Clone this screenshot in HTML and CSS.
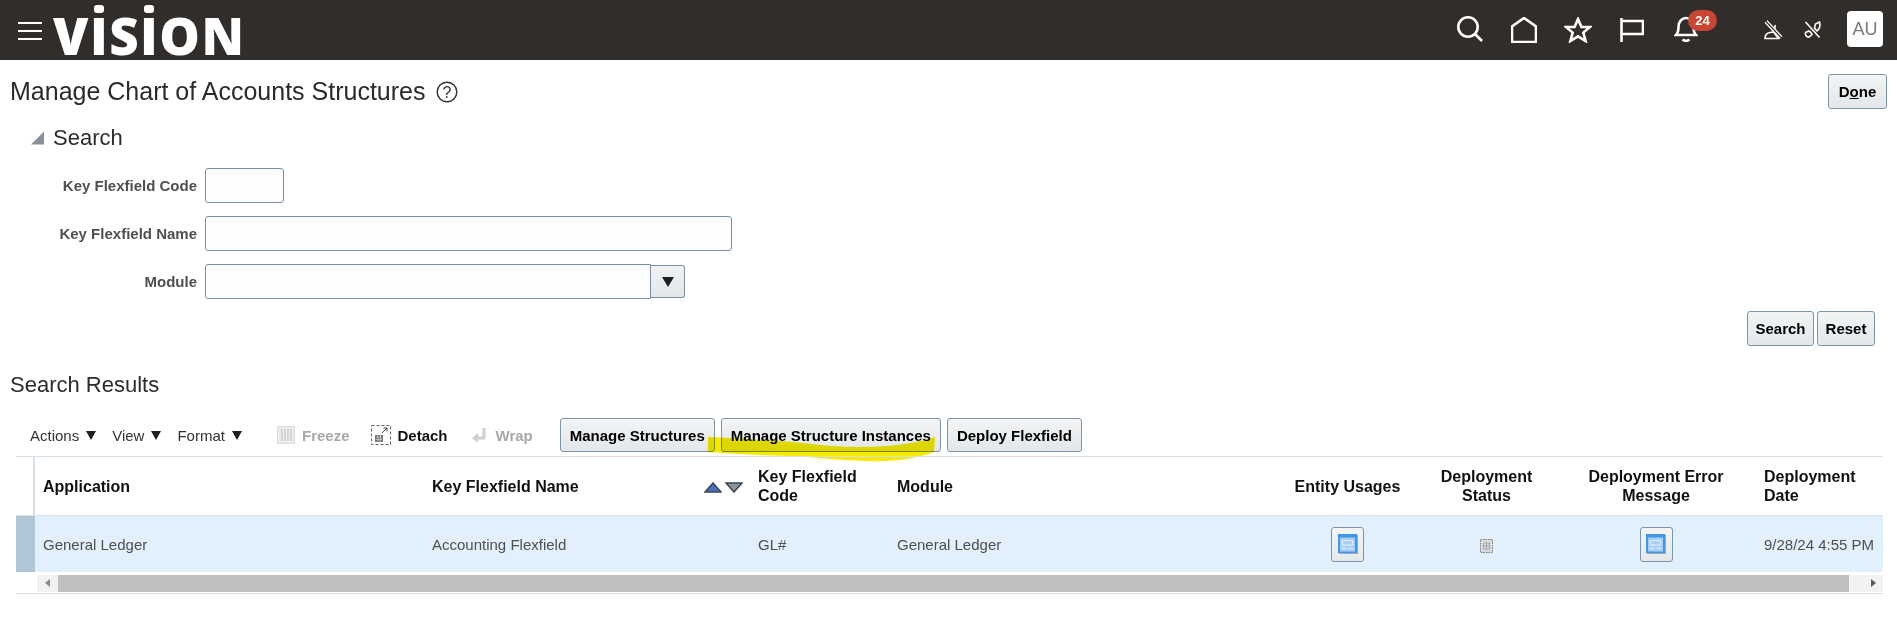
FILE: index.html
```html
<!DOCTYPE html>
<html lang="en">
<head>
<meta charset="utf-8">
<title>Manage Chart of Accounts Structures</title>
<link rel="stylesheet" href="styles.css">
</head>
<body>
<header class="topbar">
  <button class="burger" aria-label="Menu"><span></span><span></span><span></span></button>
  <div class="logo">V<span class="dotted">I</span>S<span class="dotted">I</span>ON</div>
  <nav class="top-icons">
    <svg class="ti ti-search" viewBox="0 0 26 26"><circle cx="11" cy="11" r="9.700"/><path d="M18 18l7 7"/></svg>
    <svg class="ti ti-home" viewBox="0 0 26 26"><path d="M1 25V9.500L13 1l12 8.500V25z"/></svg>
    <svg class="ti ti-star" viewBox="0 0 28 26"><path d="M14 2l3.400 8h8.700l-6.800 5.600 2.300 8.400L14 19.300 6.400 24l2.300-8.400L1.900 10h8.700z"/></svg>
    <svg class="ti ti-flag" viewBox="0 0 24 24"><path d="M1.500 0v24M1.500 3H23v13H1.500"/></svg>
    <div class="bell">
      <svg class="ti ti-bell" viewBox="0 0 24 26"><path d="M2 19c2-2 2.500-4 2.500-8C4.500 5.500 8 2 12 2s7.500 3.500 7.500 9c0 4 .5 6 2.500 8z"/><path d="M8.500 23.500c2 1.500 5 1.500 7 0"/></svg>
      <span class="badge">24</span>
    </div>
    <svg class="ti ti-person" viewBox="0 0 20 20"><path d="M12 5c.5 3-1 5-3.500 5.500M2 18.500c0-3 2-5.500 5-6l3.500-.5 5 6.500z"/><path class="slash-w" d="M3 1.500l15 16"/><path class="slash-d" d="M3 1.500l15 16"/></svg>
    <svg class="ti ti-phone" viewBox="0 0 18 18"><path d="M1.500 11.500l3.500-1.500 2 1.500 1 2-3 2.500c-2 .5-4-1.500-3.500-4.500zM10.500 7l1-4 4-2c1 3.500 0 7-2.500 9z"/><path d="M1.500 1l14 15.500"/></svg>
    <div class="avatar">AU</div>
  </nav>
</header>

<main>
  <div class="title-row">
    <h1>Manage Chart of Accounts Structures</h1>
    <svg class="help" viewBox="0 0 22 22"><circle cx="11" cy="11" r="9.800"/><text x="11" y="16.500" text-anchor="middle">?</text></svg>
    <button class="btn done">D<u>o</u>ne</button>
  </div>

  <div class="section-head">
    <svg class="disclose" viewBox="0 0 14 14"><path d="M14 0v14H0z"/></svg>
    <h2>Search</h2>
  </div>

  <form class="search-form">
    <label>Key Flexfield Code</label>
    <div class="field field-code"></div>
    <label>Key Flexfield Name</label>
    <div class="field field-name"></div>
    <label>Module</label>
    <div class="combo">
      <div class="field field-module"></div>
      <div class="combo-btn"><i class="tri tri-big"></i></div>
    </div>
  </form>

  <div class="search-actions">
    <button class="btn">Search</button>
    <button class="btn">Reset</button>
  </div>

  <h2 class="results-title">Search Results</h2>

  <div class="toolbar">
    <span class="menu">Actions<i class="tri"></i></span>
    <span class="menu">View<i class="tri"></i></span>
    <span class="menu">Format<i class="tri"></i></span>
    <span class="tool tool-freeze disabled">
      <svg viewBox="0 0 18 18"><rect x=".5" y=".5" width="17" height="17" fill="#ececec" stroke="#dcdcdc"/><path d="M5 3v12M8 3v12M11 3v12M14 3v12" stroke="#c2c2c2" fill="none"/></svg>Freeze</span>
    <span class="tool tool-detach">
      <svg viewBox="0 0 20 20"><rect x=".5" y=".5" width="19" height="19" fill="none" stroke="#666" stroke-dasharray="3 2"/><rect x="4" y="10" width="8" height="7" fill="#777"/><path d="M5 12h6M5 14.500h6M7 10v7M9.500 10v7" stroke="#ddd" stroke-width=".6"/><path d="M11 8l5-5M12.500 3H16v3.500" stroke="#444" fill="none"/></svg>Detach</span>
    <span class="tool tool-wrap disabled">
      <svg viewBox="0 0 16 16"><path d="M12 1v10H5" fill="none" stroke="#d0d0d0" stroke-width="3"/><path d="M6 6v10L0 11z" fill="#d0d0d0"/></svg>Wrap</span>
    <div class="tool-btns">
      <button class="btn">Manage Structures</button>
      <button class="btn">Manage Structure Instances</button>
      <button class="btn">Deploy Flexfield</button>
    </div>
    <svg class="highlight" viewBox="0 0 228 26"><path d="M0 0C30 1 50 3 72 4c28 2 50 6 76 6 32 0 58-3 79-10l-1 15c-18 7-42 10-68 9-30-1-56-4-78-5C50 18 25 17 0 15z"/></svg>
  </div>

  <table class="grid">
    <colgroup>
      <col class="c-mark"><col class="c-app"><col class="c-name"><col class="c-code"><col class="c-mod">
      <col class="c-ent"><col class="c-stat"><col class="c-err"><col class="c-date">
    </colgroup>
    <thead>
      <tr>
        <th class="mark-head"></th>
        <th>Application</th>
        <th class="sortable">Key Flexfield Name
          <span class="sort">
            <svg viewBox="0 0 18 11"><path d="M9 1l8 9H1z" fill="#4a70b8" stroke="#3b4652" stroke-width="1.500"/></svg>
            <svg viewBox="0 0 18 11"><path d="M1 1h16l-8 9z" fill="#8e9499" stroke="#3b4652" stroke-width="1.500"/></svg>
          </span>
        </th>
        <th>Key Flexfield<br>Code</th>
        <th>Module</th>
        <th class="ctr">Entity Usages</th>
        <th class="ctr">Deployment<br>Status</th>
        <th class="ctr">Deployment Error<br>Message</th>
        <th>Deployment<br>Date</th>
      </tr>
    </thead>
    <tbody>
      <tr class="selected">
        <td class="mark"></td>
        <td>General Ledger</td>
        <td>Accounting Flexfield</td>
        <td>GL#</td>
        <td>General Ledger</td>
        <td class="ctr"><span class="icon-btn"><svg viewBox="0 0 20 20"><rect x="1" y="1" width="19" height="19" fill="#a3abb1"/><rect width="19" height="19" fill="#3f97ea"/><rect x="2" y="3.500" width="15" height="14" fill="#a9d0f3"/><path d="M4.500 6.500h10v4.500h-10z" fill="none" stroke="#e2effb"/><path d="M4 14.500h4M10.500 14.500h4.500" stroke="#e2effb"/></svg></span></td>
        <td class="ctr"><svg class="status-icon" viewBox="0 0 13 14"><rect x=".5" y=".5" width="12" height="13" fill="#d9dcdf" stroke="#7a7a7a" stroke-dasharray="1.500 1"/><path d="M3.500 4h6v6h-6zM6.500 4v6M3.500 7h6" fill="none" stroke="#a5a8ab"/></svg></td>
        <td class="ctr"><span class="icon-btn"><svg viewBox="0 0 20 20"><rect x="1" y="1" width="19" height="19" fill="#a3abb1"/><rect width="19" height="19" fill="#3f97ea"/><rect x="2" y="3.500" width="15" height="14" fill="#a9d0f3"/><path d="M4.500 6.500h10v4.500h-10z" fill="none" stroke="#e2effb"/><path d="M4 14.500h4M10.500 14.500h4.500" stroke="#e2effb"/></svg></span></td>
        <td>9/28/24 4:55 PM</td>
      </tr>
    </tbody>
  </table>

  <div class="hscroll">
    <span class="arrow arrow-left"></span>
    <div class="thumb"></div>
    <span class="arrow arrow-right"></span>
  </div>
</main>
</body>
</html>
```
FILE: styles.css
```css
* { box-sizing: border-box; }
html, body { margin: 0; padding: 0; }
body {
  width: 1897px;
  height: 623px;
  overflow: hidden;
  background: #fff;
  font-family: "Liberation Sans", Arial, sans-serif;
  color: #2b2b2b;
}

/* top bar */
.topbar {
  height: 60px;
  background: #312d2a;
  display: flex;
  align-items: flex-start;
  color: #fff;
}
.burger {
  width: 24px;
  height: 18px;
  margin: 22px 0 0 18px;
  padding: 0;
  border: 0;
  background: none;
  display: flex;
  flex-direction: column;
  justify-content: space-between;
}
.burger span { display: block; height: 2px; background: #fff; }
.logo {
  margin: 5px 0 0 11px;
  font-family: "Open Sans", sans-serif;
  font-weight: 800;
  font-size: 51px;
  line-height: 60px;
  height: 54px;
  color: #fff;
  letter-spacing: 1.500px;
  white-space: nowrap;
}
.dotted { position: relative; display: inline-block; }
.dotted::before {
  content: "";
  position: absolute;
  left: 50%;
  top: 0;
  width: 10px;
  height: 8px;
  margin-left: -6px;
  background: #fff;
  border-radius: 3px;
}
.top-icons { margin-left: auto; position: relative; height: 60px; display: flex; align-items: center; padding-right: 14px; }
.ti { display: block; fill: none; stroke: #fff; stroke-width: 2.600; flex: none; }
.ti-search { width: 26px; height: 26px; margin-right: 28px; margin-top: -2px; }
.ti-home { width: 26px; height: 26px; margin-right: 27px; margin-top: -1px; }
.ti-star { width: 28px; height: 26px; margin-right: 28px; margin-top: -1px; }
.ti-flag { width: 24px; height: 24px; margin-right: 30px; margin-top: -1px; }
.bell { position: relative; width: 24px; height: 26px; margin-right: 65px; margin-top: -2px; }
.ti-bell { width: 24px; height: 26px; }
.badge {
  position: absolute;
  left: 14px;
  top: -6px;
  width: 29px;
  height: 21px;
  border-radius: 11px;
  background: #c74634;
  color: #fff;
  font-size: 13px;
  font-weight: 700;
  line-height: 21px;
  text-align: center;
}
.ti-person { width: 20px; height: 20px; margin-right: 21px; stroke-width: 1.600; }
.ti-person .slash-w { stroke: #fff; stroke-width: 4; }
.ti-person .slash-d { stroke: #312d2a; stroke-width: 1.200; }
.ti-phone { width: 18px; height: 18px; margin-right: 25px; stroke-width: 1.600; }
.avatar {
  width: 36px;
  height: 36px;
  margin-top: -2px;
  border-radius: 4px;
  background: #fff;
  color: #7a7a7a;
  font-size: 18px;
  line-height: 36px;
  text-align: center;
}

/* buttons */
.btn {
  height: 35px;
  padding: 0 9px;
  font: 700 15px "Liberation Sans", Arial, sans-serif;
  color: #000;
  background: linear-gradient(#f2f4f5, #e3e7ea);
  border: 1px solid #7d95a9;
  border-radius: 3px;
  white-space: nowrap;
}

/* title */
main { position: relative; }
.title-row {
  display: flex;
  align-items: center;
  height: 35px;
  margin-top: 14px;
  padding: 0 10px;
}
h1 { margin: 0; font-size: 25px; font-weight: 400; white-space: nowrap; }
.help { width: 22px; height: 22px; margin-left: 10px; fill: none; stroke: #333; stroke-width: 1.400; }
.help text { font: 400 16px "Liberation Sans", sans-serif; fill: #333; stroke: none; }
.done { margin-left: auto; width: 59px; padding: 0; }

.section-head {
  display: flex;
  align-items: center;
  height: 30px;
  margin: 14px 0 0 31px;
}
.disclose { width: 13px; height: 14px; fill: #8a9199; }
.section-head h2 { margin: 0 0 0 9px; font-size: 22px; font-weight: 400; }

.search-form {
  display: grid;
  grid-template-columns: 197px auto;
  column-gap: 8px;
  row-gap: 13px;
  justify-content: start;
  align-items: center;
  margin-top: 15px;
}
.search-form label {
  text-align: right;
  font-size: 15px;
  font-weight: 700;
  color: #4f4f4f;
}
.field {
  height: 35px;
  background: #fcfdfe;
  border: 1px solid #7d8f9e;
  border-radius: 3px;
}
.field-code { width: 79px; }
.field-name { width: 527px; }
.field-module { width: 446px; border-radius: 3px 0 0 3px; }
.combo { display: flex; }
.combo-btn {
  width: 34px;
  height: 33px;
  margin-top: 1px;
  display: flex;
  align-items: center;
  justify-content: center;
  background: linear-gradient(#f0f2f4, #e3e7ea);
  border: 1px solid #7d8f9e;
  border-left: 0;
  border-radius: 0 3px 3px 0;
}
.tri {
  display: inline-block;
  width: 0;
  height: 0;
  border-left: 5.500px solid transparent;
  border-right: 5.500px solid transparent;
  border-top: 9px solid #1f1f1f;
}
.tri-big { border-left-width: 6px; border-right-width: 6px; border-top-width: 10px; }

.search-actions {
  display: flex;
  justify-content: flex-end;
  gap: 3px;
  margin-top: 12px;
  padding-right: 22px;
}
.search-actions .btn:first-child { width: 67px; padding: 0; }
.search-actions .btn:last-child { width: 58px; padding: 0; }

.results-title {
  margin: 26px 0 0 10px;
  height: 26px;
  line-height: 26px;
  font-size: 22px;
  font-weight: 400;
}

/* toolbar */
.toolbar {
  position: relative;
  display: flex;
  align-items: center;
  height: 34px;
  margin-top: 20px;
  padding-left: 30px;
  font-size: 15px;
}
.menu { display: inline-flex; align-items: center; gap: 7px; color: #333; margin-right: 16px; }
.menu:nth-child(3) { margin-right: 35px; }
.tool { display: inline-flex; align-items: center; font-weight: 700; color: #111; }
.tool.disabled { color: #a8a8a8; }
.tool svg { display: block; flex: none; }
.tool-freeze svg { width: 18px; height: 18px; margin-right: 7px; }
.tool-freeze { margin-right: 21px; }
.tool-detach svg { width: 20px; height: 20px; margin-right: 7px; }
.tool-detach { margin-right: 24px; }
.tool-wrap svg { width: 16px; height: 16px; margin-right: 8px; }
.tool-wrap { margin-right: 27px; }
.tool-btns { display: flex; gap: 6px; }
.tool-btns .btn { height: 34px; }
.highlight {
  position: absolute;
  left: 708px;
  top: 19px;
  width: 228px;
  height: 26px;
  fill: #f6ea00;
  mix-blend-mode: multiply;
  pointer-events: none;
}

/* table */
.grid {
  table-layout: fixed;
  width: 1867px;
  margin: 4px 0 0 16px;
  border-collapse: separate;
  border-spacing: 0;
  font-size: 15px;
}
.c-mark { width: 19px; }
.c-app { width: 389px; }
.c-name { width: 326px; }
.c-code { width: 139px; }
.c-mod { width: 389px; }
.c-ent { width: 139px; }
.c-stat { width: 139px; }
.c-err { width: 200px; }
.c-date { width: 127px; }
.grid th {
  height: 60px;
  padding: 0 0 0 8px;
  border-top: 1px solid #d6dfe6;
  border-bottom: 1px solid #d6dfe6;
  text-align: left;
  vertical-align: middle;
  font-size: 16px;
  font-weight: 700;
  line-height: 19px;
  color: #111;
  position: relative;
}
.grid th.ctr, .grid td.ctr { text-align: center; padding-left: 0; }
.mark-head { border-right: 2px solid #d6dfe6; }
.grid td {
  height: 56px;
  padding: 0 0 0 8px;
  vertical-align: middle;
  color: #4f4f4f;
  white-space: nowrap;
}
.selected td { background: #e2f0fd; }
.selected td.mark { background: #b0c5d6; padding: 0; }
.sort {
  position: absolute;
  left: 280px;
  top: 25px;
  display: flex;
  gap: 3px;
}
.sort svg { display: block; width: 18px; height: 11px; }
.icon-btn {
  display: inline-flex;
  align-items: center;
  justify-content: center;
  width: 33px;
  height: 35px;
  vertical-align: middle;
  background: linear-gradient(#f2f4f5, #e6e9eb);
  border: 1px solid #7d95a9;
  border-radius: 3px;
}
.icon-btn svg { display: block; width: 20px; height: 20px; }
.status-icon { display: inline-block; width: 13px; height: 14px; vertical-align: middle; }

/* horizontal scrollbar */
.hscroll {
  display: flex;
  align-items: center;
  width: 1867px;
  height: 22px;
  margin-left: 16px;
  padding: 3px 0 2px 21px;
  border-bottom: 1px solid #d6dfe6;
  background: linear-gradient(#fff 3px, #f2f2f2 3px, #f2f2f2 20px, #fff 20px) no-repeat 21px 0;
}
.hscroll .thumb { width: 1791px; height: 17px; background: #c0c0c0; }
.arrow { width: 0; height: 0; border-top: 4px solid transparent; border-bottom: 4px solid transparent; flex: none; }
.arrow-left { width: 21px; border-left: 0; position: relative; }
.arrow-left::before {
  content: "";
  position: absolute;
  left: 8px;
  top: -4px;
  border-top: 4px solid transparent;
  border-bottom: 4px solid transparent;
  border-right: 5px solid #8a8a8a;
}
.arrow-right { position: relative; width: 34px; }
.arrow-right::before {
  content: "";
  position: absolute;
  left: 22px;
  top: -4px;
  border-top: 4px solid transparent;
  border-bottom: 4px solid transparent;
  border-left: 5px solid #5a5a5a;
}
```
